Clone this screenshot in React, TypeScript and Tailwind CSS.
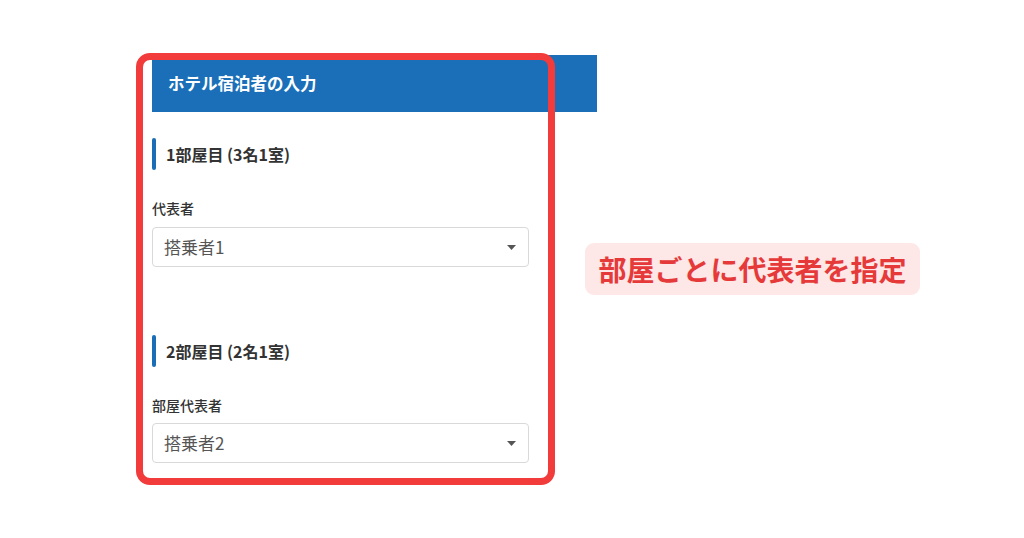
const font = { fontFamily: '"Noto Sans CJK JP", "Noto Sans", sans-serif' };

function RoomHeading({ title }: { title: string }) {
  return (
    <div className="flex h-[32px] items-center">
      <div className="h-full w-[4px] rounded-full bg-[#1b6db5]" />
      <span className="ml-[10px] text-[16px] font-bold text-[#333]">{title}</span>
    </div>
  );
}

function SelectBox({ value }: { value: string }) {
  return (
    <div className="flex h-[40px] items-center justify-between rounded-[4px] border border-[#d9d9d9] bg-white pl-[11px] pr-[12px]">
      <span className="text-[17px] text-[#555]">{value}</span>
      <svg width="9" height="5" viewBox="0 0 9 5">
        <path d="M0 0h9L4.5 5z" fill="#555" />
      </svg>
    </div>
  );
}

export default function App() {
  return (
    <div className="relative h-[538px] w-[1024px] overflow-hidden bg-white" style={font}>
      <div className="ml-[152px] pt-[55px]">
        <div className="flex h-[57px] w-[445px] items-center bg-[#1b6fb8] pl-[16px]">
          <span className="text-[16.5px] font-bold text-white">ホテル宿泊者の入力</span>
        </div>

        <div className="w-[377px]">
          <div className="mt-[26px]">
            <RoomHeading title="1部屋目 (3名1室)" />
          </div>
          <div className="mt-[28px] h-[20px] text-[14px] leading-[20px] font-medium text-[#333]">代表者</div>
          <div className="mt-[9px]">
            <SelectBox value="搭乗者1" />
          </div>

          <div className="mt-[68px]">
            <RoomHeading title="2部屋目 (2名1室)" />
          </div>
          <div className="mt-[28px] h-[20px] text-[14px] leading-[20px] font-medium text-[#333]">部屋代表者</div>
          <div className="mt-[8px]">
            <SelectBox value="搭乗者2" />
          </div>
        </div>
      </div>

      {/* annotation frame */}
      <div className="pointer-events-none absolute left-[136px] top-[53px] h-[432px] w-[419px] rounded-[14px] border-[7px] border-[#f23b3b]" />

      {/* annotation label */}
      <div className="absolute left-[585px] top-[243px] flex h-[52px] w-[335px] items-center justify-center rounded-[9px] bg-[#fde7e7]">
        <span className="text-[28px] font-bold text-[#e63a3a]">部屋ごとに代表者を指定</span>
      </div>
    </div>
  );
}
